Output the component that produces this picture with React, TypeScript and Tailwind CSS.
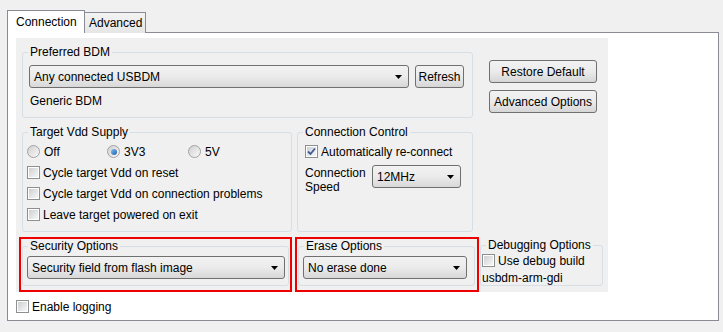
import React from 'react'

function Arrow() {
  return (
    <svg width="7" height="4" viewBox="0 0 7 4" className="shrink-0">
      <path d="M0 0h7L3.5 4z" fill="#000" />
    </svg>
  )
}

function Combo({ value, className }: { value: string; className: string }) {
  return (
    <div
      className={`h-[23px] border border-[#707070] rounded-[3px] bg-linear-to-b from-[#f2f2f2] via-[#ebebeb] to-[#d8d8d8] flex items-center justify-between pl-[4px] pr-[6px] ${className}`}
    >
      <span>{value}</span>
      <Arrow />
    </div>
  )
}

function Button({ label, className }: { label: string; className: string }) {
  return (
    <div
      className={`h-[23px] border border-[#707070] rounded-[3px] bg-linear-to-b from-[#f2f2f2] via-[#ebebeb] to-[#d6d6d6] flex items-center justify-center ${className}`}
    >
      {label}
    </div>
  )
}

function CheckBox({ checked = false }: { checked?: boolean }) {
  return (
    <span className="w-[13px] h-[13px] border border-[#8e8f8f] bg-white p-[1px] flex shrink-0">
      <span className="flex-1 bg-linear-to-br from-[#cdd0d4] to-[#f7f7f7] flex items-center justify-center">
        {checked && (
          <svg width="9" height="9" viewBox="0 0 9 9">
            <path d="M1 4.5L3.5 7L8 1.5" stroke="#3d5a95" strokeWidth="1.8" fill="none" />
          </svg>
        )}
      </span>
    </span>
  )
}

function Radio({ checked = false }: { checked?: boolean }) {
  return (
    <span className="w-[13px] h-[13px] rounded-full border border-[#a2a2a2] bg-linear-to-br from-[#d0d0d0] to-[#fafafa] flex items-center justify-center shrink-0">
      {checked && <span className="w-[6px] h-[6px] rounded-full bg-linear-to-br from-[#7fc1f3] to-[#1a5fa8]" />}
    </span>
  )
}

function Group({
  label,
  className,
  children,
}: {
  label: string
  className: string
  children?: React.ReactNode
}) {
  return (
    <fieldset className={`border border-[#d5dfe5] rounded-[3px] min-w-0 shrink-0 ${className}`}>
      <legend className="ml-[5px] px-[2px] leading-[14px]">{label}</legend>
      {children}
    </fieldset>
  )
}

export default function App() {
  return (
    <div className="w-[723px] h-[332px] bg-[#f0f0f0] pt-[10px] pl-[7px] text-[12px] leading-[14px] text-black font-['Liberation_Sans',Arial,sans-serif] overflow-hidden">
      {/* Tabs */}
      <div className="flex items-start h-[23px]">
        <div className="relative z-10 w-[78px] h-[23px] bg-white border border-b-0 border-[#898c95] pl-[8px] pt-[4px]">
          Connection
        </div>
        <div className="mt-[2px] w-[61px] h-[21px] border-t border-r border-[#898c95] bg-linear-to-b from-[#f3f3f3] to-[#e6e6e6] pl-[4px] pt-[3px]">
          Advanced
        </div>
      </div>

      {/* Panel */}
      <div className="-mt-px w-[712px] h-[289px] border border-[#898c95] bg-white pl-[8px] pt-[5px]">
        <div className="w-[592px] h-[254px] bg-[#f0f0f0] pl-[3px] pt-[7px]">
          {/* Row 1 */}
          <div className="flex items-start ml-[3px]">
            <Group label="Preferred BDM" className="w-[451px] h-[73px]">
              <div className="flex items-center pl-[6px] mt-[6px]">
                <Combo value="Any connected USBDM" className="w-[380px]" />
                <Button label="Refresh" className="ml-[6px] w-[49px]" />
              </div>
              <div className="mt-[6px] pl-[7px]">Generic BDM</div>
            </Group>
            <div className="ml-[16px] mt-[15px] flex flex-col gap-[7px]">
              <Button label="Restore Default" className="w-[108px]" />
              <Button label="Advanced Options" className="w-[108px]" />
            </div>
          </div>

          {/* Row 2 */}
          <div className="flex items-start ml-[3px] mt-[7px]">
            <Group label="Target Vdd Supply" className="w-[270px] h-[107px]">
              <div className="mt-[2px] pl-[4px]">
                <div className="h-[21px] flex items-center">
                  <div className="w-[80px] flex items-center gap-[4px]">
                    <Radio />
                    <span>Off</span>
                  </div>
                  <div className="w-[81px] flex items-center gap-[4px]">
                    <Radio checked />
                    <span>3V3</span>
                  </div>
                  <div className="flex items-center gap-[4px]">
                    <Radio />
                    <span>5V</span>
                  </div>
                </div>
                {['Cycle target Vdd on reset', 'Cycle target Vdd on connection problems', 'Leave target powered on exit'].map(
                  (t) => (
                    <div key={t} className="h-[21px] flex items-center gap-[3px]">
                      <CheckBox />
                      <span>{t}</span>
                    </div>
                  )
                )}
              </div>
            </Group>
            <Group label="Connection Control" className="ml-[5px] w-[176px] h-[107px]">
              <div className="mt-[2px] pl-[7px]">
                <div className="h-[21px] flex items-center gap-[3px]">
                  <CheckBox checked />
                  <span>Automatically re-connect</span>
                </div>
                <div className="flex items-start mt-[3px]">
                  <div className="w-[67px] pt-[1px]">
                    Connection
                    <br />
                    Speed
                  </div>
                  <Combo value="12MHz" className="w-[89px]" />
                </div>
              </div>
            </Group>
          </div>

          {/* Row 3 */}
          <div className="flex items-start mt-[5px]">
            <div className="w-[273px] h-[55px] border-2 border-[#ee0000]">
              <Group label="Security Options" className="ml-[1px] w-[267px] h-[47px]">
                <Combo value="Security field from flash image" className="mt-[3px] ml-[4px] w-[258px]" />
              </Group>
            </div>
            <div className="ml-[3px] w-[184px] h-[55px] border-2 border-[#ee0000]">
              <Group label="Erase Options" className="ml-[1px] w-[177px] h-[47px]">
                <Combo value="No erase done" className="mt-[3px] ml-[4px] w-[164px]" />
              </Group>
            </div>
            <Group label="Debugging Options" className="ml-[1px] mt-[1px] w-[123px] h-[48px]">
              <div className="h-[17px] flex items-center gap-[3px] ml-[1px]">
                <CheckBox />
                <span>Use debug build</span>
              </div>
              <div className="h-[17px] flex items-center pl-[1px]">usbdm-arm-gdi</div>
            </Group>
          </div>
        </div>

        {/* Logging */}
        <div className="mt-[6px] h-[17px] flex items-center gap-[3px]">
          <CheckBox />
          <span>Enable logging</span>
        </div>
      </div>
    </div>
  )
}
